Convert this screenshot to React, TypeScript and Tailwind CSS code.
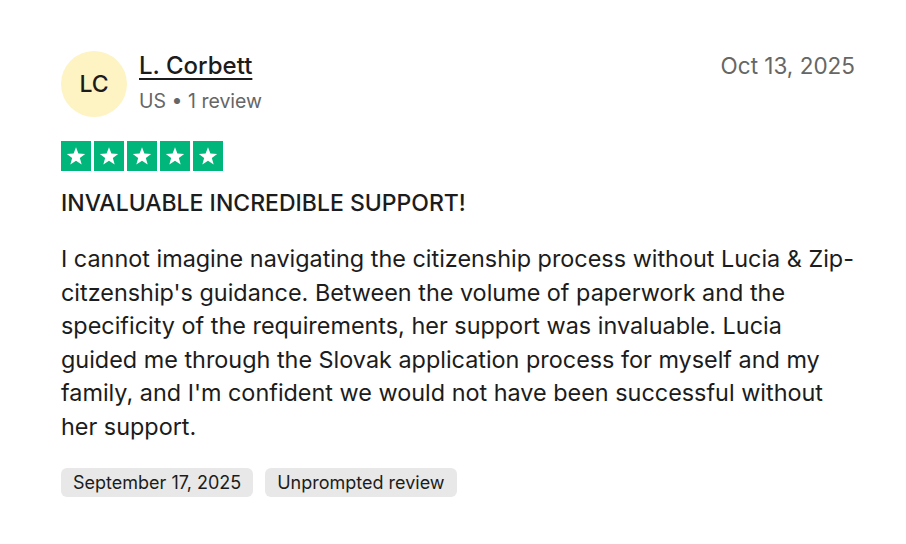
import React from 'react';

const Star: React.FC = () => (
  <div className="w-[30px] h-[30px] bg-[#00b67a] flex items-center justify-center">
    <svg viewBox="0 0 24 24" className="w-[22px] h-[22px]" fill="#ffffff">
      <path d="M12 2.5l2.6 6.9 7.4.3-5.8 4.6 2 7.1L12 17.3l-6.2 4.1 2-7.1L2 9.7l7.4-.3z" />
    </svg>
  </div>
);

export default function App() {
  return (
    <div
      className="w-[906px] h-[544px] bg-white pl-[61px] pr-[51px] pt-[51px] text-[#1c1c1c]"
      style={{ fontFamily: 'Inter, "Noto Sans", sans-serif' }}
    >
      <div className="flex items-start justify-between">
        <div className="flex items-start gap-[12px]">
          <div className="w-[66px] h-[66px] rounded-full bg-[#fdf3c3] flex items-center justify-center text-[23px] font-medium text-[#1c1c1c]">
            LC
          </div>
          <div className="flex flex-col">
            <a className="text-[24px] font-medium underline underline-offset-[4px] decoration-[2px] leading-[30px]">
              L. Corbett
            </a>
            <span className="text-[19.5px] text-[#666666] leading-[26px] mt-[7px]">US • 1 review</span>
          </div>
        </div>
        <span className="text-[22.5px] text-[#666666] leading-[30px]">Oct 13, 2025</span>
      </div>

      <div className="flex gap-[3px] mt-[24px]">
        <Star />
        <Star />
        <Star />
        <Star />
        <Star />
      </div>

      <h2 className="text-[23px] font-medium leading-[30px] mt-[17px]">INVALUABLE INCREDIBLE SUPPORT!</h2>

      <p className="text-[23.4px] leading-[33.6px] mt-[24px] text-[#1c1c1c]">
        I cannot imagine navigating the citizenship process without Lucia &amp; Zip-citzenship's guidance. Between the
        volume of paperwork and the specificity of the requirements, her support was invaluable. Lucia guided me through
        the Slovak application process for myself and my family, and I'm confident we would not have been successful
        without her support.
      </p>

      <div className="flex gap-[12px] mt-[24px]">
        <span className="h-[29px] px-[12px] rounded-[6px] bg-[#e8e8e8] text-[18px] flex items-center">
          September 17, 2025
        </span>
        <span className="h-[29px] px-[12px] rounded-[6px] bg-[#e8e8e8] text-[18px] flex items-center">
          Unprompted review
        </span>
      </div>
    </div>
  );
}
